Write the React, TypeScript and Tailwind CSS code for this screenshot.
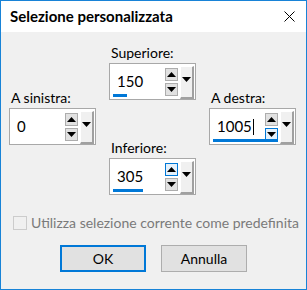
import React from 'react';

const font = { fontFamily: 'Lato, "Noto Sans", sans-serif' };

function Arrow({ dir }: { dir: 'up' | 'down' }) {
  return (
    <svg width="9" height="5" viewBox="0 0 9 5" className="block">
      {dir === 'up' ? <polygon points="0,5 9,5 4.5,0" fill="#000" /> : <polygon points="0,0 9,0 4.5,5" fill="#000" />}
    </svg>
  );
}

function Spin({
  value,
  bar,
  caret,
  hot,
}: {
  value: string;
  bar?: string;
  caret?: boolean;
  hot?: 'up' | 'down';
}) {
  const btn = 'w-[13px] h-[13px] flex items-center justify-center border';
  return (
    <div className="relative w-[87px] h-[37px] bg-white border border-[#a8a8a8] flex items-center">
      <div className="flex-1 pl-[7px] text-[15px] text-black leading-none flex items-center">
        {value}
        {caret && <span className="inline-block w-px h-[16px] bg-black ml-px" />}
      </div>
      <div className="flex flex-col gap-[2px] mr-[2px]">
        <div className={`${btn} ${hot === 'up' ? 'bg-[#e5f1fb] border-[#0078d7]' : 'bg-[#e1e1e1] border-[#adadad]'}`}>
          <Arrow dir="up" />
        </div>
        <div className={`${btn} ${hot === 'down' ? 'bg-[#e5f1fb] border-[#0078d7]' : 'bg-[#e1e1e1] border-[#adadad]'}`}>
          <Arrow dir="down" />
        </div>
      </div>
      <div className="w-[14px] h-[33px] mr-px self-start mt-[2px] bg-[#f0f0f0] border-r-2 border-b-2 border-[#a0a0a0] border-l border-l-white border-t border-t-white flex items-start justify-center pt-[10px]">
        <svg width="9" height="5" viewBox="0 0 9 5" className="block">
          <polygon points="0,0 9,0 4.5,5" fill="#000" />
        </svg>
      </div>
      {bar && <div className={`absolute left-[3px] bottom-[2px] h-[3px] bg-[#0078d7] ${bar}`} />}
    </div>
  );
}

function Field({ label, children }: { label: string; children: React.ReactNode }) {
  return (
    <div className="flex flex-col">
      <div className="h-[20px] text-[14px] leading-[20px] text-black pl-[2px]">{label}</div>
      {children}
    </div>
  );
}

export default function App() {
  return (
    <div className="w-[307px] h-[290px] bg-[#f0f0f0] border border-[#1883d7] flex flex-col" style={font}>
      {/* Title bar */}
      <div className="h-[31px] bg-white flex items-center justify-between pl-[9px] pr-[11px]">
        <span className="text-[15px] font-bold text-black">Selezione personalizzata</span>
        <svg width="11" height="11" viewBox="0 0 11 11">
          <path d="M0.5 0.5 L10.5 10.5 M10.5 0.5 L0.5 10.5" stroke="#000" strokeWidth="1" />
        </svg>
      </div>

      {/* Fields */}
      <div className="flex gap-[13px] pl-[8px]">
        <div className="pt-[56px]">
          <Field label="A sinistra:">
            <Spin value="0" />
          </Field>
        </div>
        <div className="pt-[11px] flex flex-col gap-[38px]">
          <Field label="Superiore:">
            <Spin value="150" bar="w-[14px]" />
          </Field>
          <Field label="Inferiore:">
            <Spin value="305" bar="w-[30px]" hot="up" />
          </Field>
        </div>
        <div className="pt-[56px]">
          <Field label="A destra:">
            <Spin value="1005" bar="w-[65px]" caret hot="down" />
          </Field>
        </div>
      </div>

      {/* Checkbox */}
      <div className="flex items-center gap-[4px] pl-[12px] mt-[17px]">
        <div className="w-[14px] h-[14px] shrink-0 border border-[#cccccc] bg-[#f0f0f0]" />
        <span className="text-[14px] text-[#7a7a7a] whitespace-nowrap">Utilizza selezione corrente come predefinita</span>
      </div>

      {/* Buttons */}
      <div className="flex gap-[15px] pl-[59px] mt-[12px]">
        <button className="w-[86px] h-[27px] bg-[#e1e1e1] border-2 border-[#0078d7] text-[14px] text-black">OK</button>
        <button className="w-[86px] h-[27px] bg-[#e1e1e1] border border-[#adadad] text-[14px] text-black">Annulla</button>
      </div>
    </div>
  );
}
